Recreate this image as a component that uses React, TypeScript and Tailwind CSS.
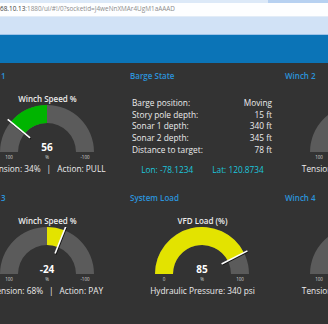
import React from "react";

const R = 47;
const r = 29;
const CX = 77;
const CY = 47;

function pt(rad: number, a: number): [number, number] {
  const t = (a * Math.PI) / 180;
  return [CX + rad * Math.cos(t), CY - rad * Math.sin(t)];
}

function band(a1: number, a2: number) {
  const [x1, y1] = pt(R, a1);
  const [x2, y2] = pt(R, a2);
  const [x3, y3] = pt(r, a2);
  const [x4, y4] = pt(r, a1);
  return `M${x1} ${y1} A${R} ${R} 0 0 1 ${x2} ${y2} L${x3} ${y3} A${r} ${r} 0 0 0 ${x4} ${y4} Z`;
}

type GaugeProps = {
  title: string;
  value: number;
  min: number;
  max: number;
  origin: number;
  color: string;
  minLabel: string;
  maxLabel: string;
};

function Gauge({ title, value, min, max, origin, color, minLabel, maxLabel }: GaugeProps) {
  const ang = (v: number) => 180 - ((v - min) / (max - min)) * 180;
  const a0 = ang(origin);
  const av = ang(value);
  const [nx1, ny1] = pt(22, av);
  const [nx2, ny2] = pt(51, av);
  return (
    <div className="flex flex-col items-center">
      <div className="mt-[11px] h-[12px] leading-[12px] text-[8px] font-semibold text-[#ececec] whitespace-nowrap">{title}</div>
      <svg width="155" height="58" viewBox="0 0 155 58" className="block">
        <path d={band(180, 0)} fill="#5b5b5b" />
        <path d={band(Math.max(a0, av), Math.min(a0, av))} fill={color} />
        <line x1={nx1 + 0.6} y1={ny1 + 0.8} x2={nx2 + 0.6} y2={ny2 + 0.8} stroke="#111" strokeWidth="1.6" />
        <line x1={nx1} y1={ny1} x2={nx2} y2={ny2} stroke="#ffffff" strokeWidth="1.6" />
        <text x={CX} y={CY - 1} textAnchor="middle" fontSize="10" fontWeight="700" fill="#ffffff" fontFamily="'Open Sans', sans-serif">
          {value}
        </text>
        <text x={CX} y={CY + 7} textAnchor="middle" fontSize="4.5" fill="#d8d8d8" fontFamily="'Open Sans', sans-serif">
          %
        </text>
        <text x={CX - 38} y={CY + 6.5} textAnchor="middle" fontSize="4.5" fill="#d8d8d8" fontFamily="'Open Sans', sans-serif">
          {minLabel}
        </text>
        <text x={CX + 38} y={CY + 6.5} textAnchor="middle" fontSize="4.5" fill="#d8d8d8" fontFamily="'Open Sans', sans-serif">
          {maxLabel}
        </text>
      </svg>
    </div>
  );
}

function GroupTitle({ children }: { children: React.ReactNode }) {
  return (
    <div className="mt-[7px] h-[12px] px-[5px] leading-[12px] text-[8px] font-semibold text-[#2b93dc] whitespace-nowrap">
      {children}
    </div>
  );
}

function Winch({ n, value, color, tension, action }: { n: number; value: number; color: string; tension: number; action: string }) {
  return (
    <div className="h-[122px] flex flex-col">
      <GroupTitle>Winch {n}</GroupTitle>
      <Gauge title="Winch Speed %" value={value} min={100} max={-100} origin={0} color={color} minLabel="100" maxLabel="-100" />
      <div className="h-[12px] leading-[12px] flex justify-center items-center gap-[6px] text-[8.3px] text-[#ececec] whitespace-nowrap">
        <span>Tension: {tension}%</span>
        <span>|</span>
        <span>Action: {action}</span>
      </div>
    </div>
  );
}

const rows: [string, string][] = [
  ["Barge position:", "Moving"],
  ["Story pole depth:", "15 ft"],
  ["Sonar 1 depth:", "340 ft"],
  ["Sonar 2 depth:", "345 ft"],
  ["Distance to target:", "78 ft"],
];

function Barge() {
  return (
    <div className="h-[122px] flex flex-col">
      <GroupTitle>Barge State</GroupTitle>
      <div className="mt-[15px] flex flex-col px-[7px] text-[8.3px] text-[#ececec]">
        {rows.map(([k, v]) => (
          <div key={k} className="h-[11.65px] leading-[11.65px] flex justify-between pr-[1px]">
            <span>{k}</span>
            <span>{v}</span>
          </div>
        ))}
      </div>
      <div className="mt-[9px] h-[12px] leading-[12px] flex justify-center gap-[19px] text-[8.3px] text-[#1cc6dc]">
        <span>Lon: -78.1234</span>
        <span>Lat: 120.8734</span>
      </div>
    </div>
  );
}

function SystemLoad() {
  return (
    <div className="h-[122px] flex flex-col">
      <GroupTitle>System Load</GroupTitle>
      <Gauge title="VFD Load (%)" value={85} min={0} max={100} origin={0} color="#e3e300" minLabel="0" maxLabel="100" />
      <div className="h-[12px] leading-[12px] text-center text-[8.3px] text-[#ececec] whitespace-nowrap">
        Hydraulic Pressure: 340 psi
      </div>
    </div>
  );
}

export default function App() {
  return (
    <div className="w-[328px] h-[324px] overflow-hidden bg-[#333333] font-['Open_Sans','Noto_Sans',sans-serif]">
      <div className="h-[3px] flex">
        <div className="w-[268px] bg-[#dce9f8]" />
        <div className="flex-1 bg-[#b7d1f1]" />
      </div>
      <div className="h-[14px] bg-[#fdfeff] border-b border-[#e2ecf7] flex items-center text-[6.4px] leading-none whitespace-nowrap">
        <span className="text-[#3a3a3a]">68.10.13</span>
        <span className="text-[#8c8c8c]">:1880/ui/#!/0?socketid=J4weNnXMAr4UgM1aAAAD</span>
      </div>
      <div className="h-[18px] bg-[#d1e2f6] border-b border-[#9fc3e8]" />
      <div className="h-[28px] bg-[#0b74b7]" />
      <div className="ml-[-30px] grid grid-cols-[155px_155px_155px] w-[465px]">
        <Winch n={1} value={56} color="#00b400" tension={34} action="PULL" />
        <Barge />
        <Winch n={2} value={-30} color="#00b400" tension={52} action="PAY" />
        <Winch n={3} value={-24} color="#e3e300" tension={68} action="PAY" />
        <SystemLoad />
        <Winch n={4} value={-40} color="#e3e300" tension={45} action="PAY" />
      </div>
    </div>
  );
}
